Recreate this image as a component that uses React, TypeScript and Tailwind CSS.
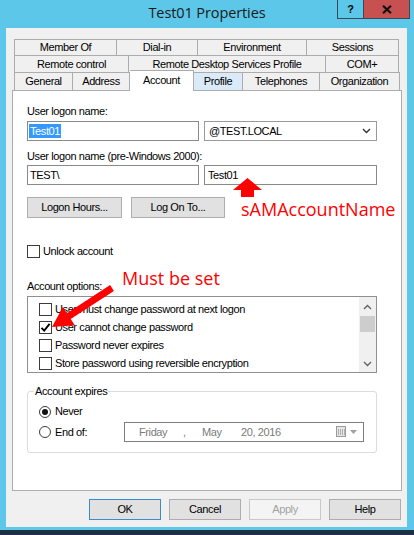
import React from "react";

function CheckBox({ checked }: { checked?: boolean }) {
  return (
    <span className="w-[13px] h-[13px] border border-[#3c3c3c] bg-white shrink-0 flex items-center justify-center">
      {checked && (
        <svg width="11" height="11" viewBox="0 0 11 11">
          <path d="M1.5 5.8 L4.2 8.6 L9.6 1.8" stroke="#000" strokeWidth="1.9" fill="none" />
        </svg>
      )}
    </span>
  );
}

function Radio({ on }: { on?: boolean }) {
  return (
    <span className="w-[12px] h-[12px] rounded-full border border-[#3c3c3c] bg-white shrink-0 flex items-center justify-center">
      {on && <span className="w-[6px] h-[6px] rounded-full bg-[#111]" />}
    </span>
  );
}

const tab =
  "h-full flex items-center justify-center border-t border-r border-[#acacac] bg-[#f0f0f0] text-black";

export default function App() {
  return (
    <div className="relative w-[414px] h-[535px] overflow-hidden bg-[#5cc7e8] flex flex-col font-['Liberation_Sans',Arial,sans-serif] text-[11px] leading-[13px] tracking-[-0.4px] text-black">
      {/* Title bar */}
      <div className="relative h-[28px] shrink-0 flex items-center justify-center pb-[3px]">
        <span className="font-['Open_Sans',sans-serif] text-[14.5px] tracking-[-0.1px] text-[#1a1a1a]">
          Test01 Properties
        </span>
        <div className="absolute top-0 right-[4px] flex h-[19px] border-b border-l border-r border-[#3a4a55]">
          <div className="w-[26px] h-full flex items-center justify-center border-r border-[#3a4a55] font-bold text-[11px] tracking-normal">
            ?
          </div>
          <div className="w-[45px] h-full bg-[#c75050] flex items-center justify-center">
            <svg width="10" height="9" viewBox="0 0 10 9">
              <path d="M1 0.8 L9 8.2 M9 0.8 L1 8.2" stroke="#111" strokeWidth="2.2" />
            </svg>
          </div>
        </div>
      </div>

      {/* Dialog body */}
      <div className="ml-[6px] mr-[7px] h-[499px] shrink-0 bg-[#f0f0f0] flex flex-col">
        {/* Tabs */}
        <div className="ml-[8px] mt-[11px] flex flex-col">
          <div className="flex h-[16px]">
            <div className={`${tab} w-[103px] border-l`}>Member Of</div>
            <div className={`${tab} w-[81px]`}>Dial-in</div>
            <div className={`${tab} w-[109px]`}>Environment</div>
            <div className={`${tab} w-[92px]`}>Sessions</div>
          </div>
          <div className="flex h-[17px]">
            <div className={`${tab} w-[115px] border-l`}>Remote control</div>
            <div className={`${tab} w-[197px]`}>Remote Desktop Services Profile</div>
            <div className={`${tab} w-[73px]`}>COM+</div>
          </div>
          <div className="flex h-[18px] items-end">
            <div className={`${tab} w-[59px] border-l`}>General</div>
            <div className={`${tab} w-[57px]`}>Address</div>
            <div className="relative z-10 w-[64px] h-[21px] mb-[-1px] flex items-start justify-center pt-[3px] border-t border-r border-[#acacac] bg-white">
              Account
            </div>
            <div className={`${tab} w-[49px] !bg-[#dbeaf8]`}>Profile</div>
            <div className={`${tab} w-[77px]`}>Telephones</div>
            <div className={`${tab} w-[80px]`}>Organization</div>
          </div>
        </div>

        {/* Tab panel */}
        <div className="ml-[6px] w-[390px] h-[401px] border border-[#adadad] bg-white pl-[14px] pt-[14px] flex flex-col">
          <div>User logon name:</div>
          <div className="mt-[3px] flex gap-[5px]">
            <div className="w-[172px] h-[20px] border border-[#8a8a8a] flex items-center pl-[1px]">
              <span className="bg-[#3399ff] text-white px-[1px] leading-[14px]">Test01</span>
            </div>
            <div className="w-[173px] h-[20px] border border-[#9a9a9a] flex items-center justify-between pl-[4px] pr-[5px]">
              <span>@TEST.LOCAL</span>
              <svg width="9" height="6" viewBox="0 0 9 6">
                <path d="M1 1 L4.5 4.5 L8 1" stroke="#333" strokeWidth="1.4" fill="none" />
              </svg>
            </div>
          </div>

          <div className="mt-[9px]">User logon name (pre-Windows 2000):</div>
          <div className="mt-[2px] flex gap-[5px]">
            <div className="w-[172px] h-[20px] border border-[#8a8a8a] flex items-center pl-[2px]">TEST\</div>
            <div className="w-[173px] h-[20px] border border-[#8a8a8a] flex items-center pl-[3px]">Test01</div>
          </div>

          <div className="mt-[12px] flex gap-[9px]">
            <div className="w-[95px] h-[21px] border border-[#adadad] bg-[#e1e1e1] flex items-center justify-center">
              Logon Hours...
            </div>
            <div className="w-[94px] h-[21px] border border-[#adadad] bg-[#e1e1e1] flex items-center justify-center">
              Log On To...
            </div>
          </div>

          <div className="mt-[27px] flex items-center gap-[3px]">
            <CheckBox />
            <span>Unlock account</span>
          </div>

          <div className="mt-[22px]">Account options:</div>
          <div className="mt-[3px] w-[350px] h-[77px] border border-[#8e8f90] flex overflow-hidden">
            <div className="flex-1 flex flex-col pl-[11px] pt-[3px]">
              {[
                ["User must change password at next logon", false],
                ["User cannot change password", true],
                ["Password never expires", false],
                ["Store password using reversible encryption", false],
              ].map(([t, c]) => (
                <div key={t as string} className="h-[18px] shrink-0 flex items-center gap-[3px]">
                  <CheckBox checked={c as boolean} />
                  <span>{t as string}</span>
                </div>
              ))}
            </div>
            <div className="w-[17px] h-full bg-[#f0f0f0] flex flex-col items-center">
              <div className="h-[19px] w-full flex items-center justify-center">
                <svg width="9" height="6" viewBox="0 0 9 6">
                  <path d="M1 5 L4.5 1.5 L8 5" stroke="#606060" strokeWidth="1.3" fill="none" />
                </svg>
              </div>
              <div className="w-[15px] h-[16px] bg-[#cdcdcd]" />
              <div className="flex-1" />
              <div className="h-[17px] w-full flex items-center justify-center">
                <svg width="9" height="6" viewBox="0 0 9 6">
                  <path d="M1 1 L4.5 4.5 L8 1" stroke="#606060" strokeWidth="1.3" fill="none" />
                </svg>
              </div>
            </div>
          </div>

          <fieldset className="mt-[12px] w-[350px] border border-[#dcdcdc] rounded-[3px] px-[6px] pb-[10px]">
            <legend className="px-[1px] leading-[13px]">Account expires</legend>
            <div className="mt-[7px] ml-[5px] flex items-center gap-[4px] h-[13px]">
              <Radio on />
              <span>Never</span>
            </div>
            <div className="mt-[4px] ml-[5px] flex items-center h-[20px]">
              <div className="w-[85px] flex items-center gap-[4px]">
                <Radio />
                <span>End of:</span>
              </div>
              <div className="w-[240px] h-[20px] border border-[#7e7e7e] bg-white flex items-center pl-[14px] pr-[6px] text-[#7a7a7a]">
                <span className="w-[44px]">Friday</span>
                <span className="w-[19px]">,</span>
                <span className="w-[39px]">May</span>
                <span>20, 2016</span>
                <div className="ml-auto flex items-center gap-[3px]">
                  <svg width="11" height="12" viewBox="0 0 11 12">
                    <rect x="0.5" y="0.5" width="9" height="10" fill="#e6e6e6" stroke="#9a9a9a" />
                    <path d="M2.5 3 V9 M4.5 3 V9 M6.5 3 V9 M8.5 3 V9" stroke="#b0b0b0" strokeWidth="1" />
                  </svg>
                  <svg width="7" height="4" viewBox="0 0 7 4">
                    <path d="M0 0 H7 L3.5 4 Z" fill="#a0a0a0" />
                  </svg>
                </div>
              </div>
            </div>
          </fieldset>
        </div>

        {/* Bottom buttons */}
        <div className="mt-[8px] flex justify-end gap-[8px] pr-[6px]">
          <div className="w-[72px] h-[21px] border border-[#3c8ad0] bg-[#e1e1e1] flex items-center justify-center">OK</div>
          <div className="w-[72px] h-[21px] border border-[#adadad] bg-[#e1e1e1] flex items-center justify-center">Cancel</div>
          <div className="w-[72px] h-[21px] border border-[#c8c8c8] bg-[#f4f4f4] text-[#a2a2a2] flex items-center justify-center">Apply</div>
          <div className="w-[72px] h-[21px] border border-[#adadad] bg-[#e1e1e1] flex items-center justify-center">Help</div>
        </div>
      </div>
      <div className="h-[3px] shrink-0" />
      <div className="flex-1 bg-[#1d3142]" />

      {/* Annotations */}
      <svg className="absolute inset-0 pointer-events-none" width="414" height="535" viewBox="0 0 414 535">
        <polygon points="247.5,178 262,190 254,190 254,197 241,197 241,190 233,190" fill="#ff0000" />
        <polygon
          points="110.1,285.1 66.9,313.2 62.8,306.9 52,327 74.8,325.3 70.7,319 113.9,290.9"
          fill="#ff0000"
        />
      </svg>
      <div className="absolute left-[241px] top-[199px] font-['Open_Sans',sans-serif] text-[18px] leading-[20px] tracking-normal text-[#ff0000]">
        sAMAccountName
      </div>
      <div className="absolute left-[122px] top-[268px] font-['Open_Sans',sans-serif] text-[18px] leading-[20px] tracking-normal text-[#ff0000]">
        Must be set
      </div>
    </div>
  );
}
